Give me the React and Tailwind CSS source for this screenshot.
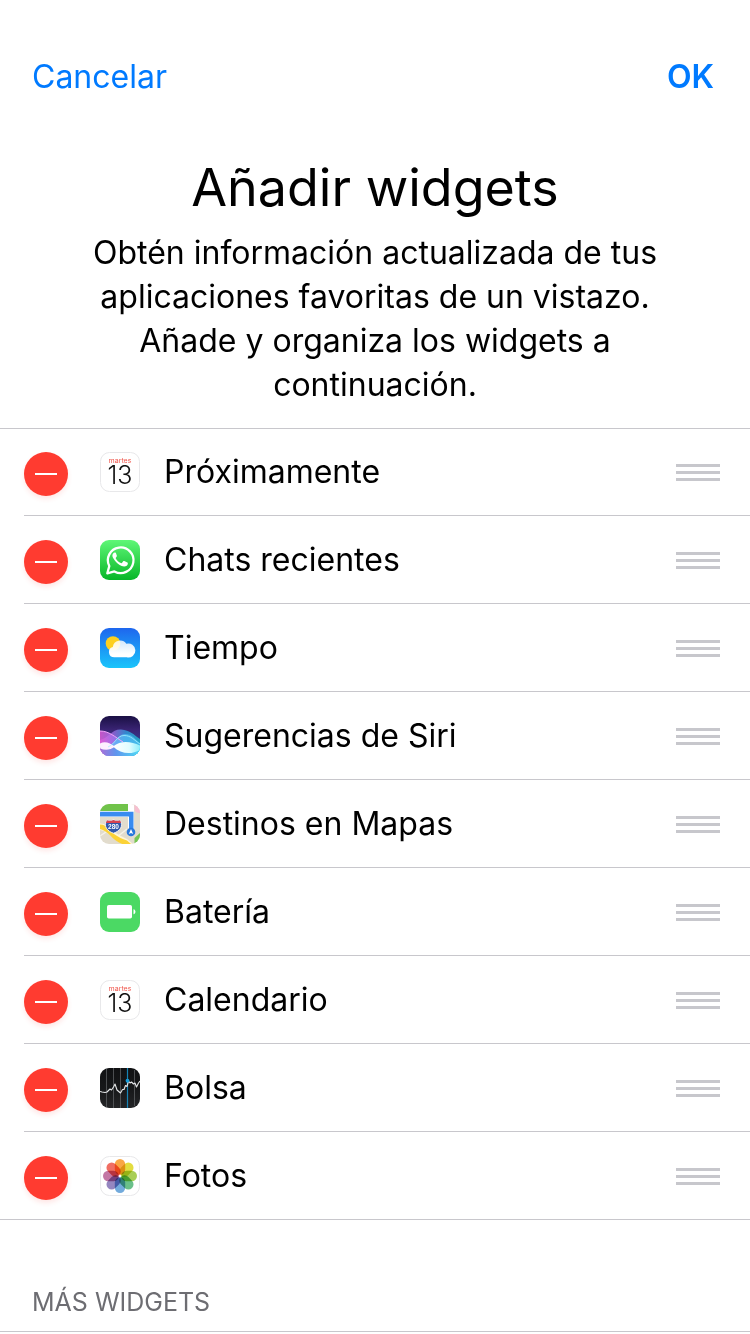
import React from "react";

function CalendarIcon() {
  return (
    <svg viewBox="0 0 40 40" className="size-10" aria-hidden="true">
      <rect x="0.5" y="0.5" width="39" height="39" rx="9" fill="#fff" stroke="#e8e8ea" />
      <text x="20" y="11" textAnchor="middle" fontSize="7" fill="#f0564c" fontFamily="Inter, sans-serif">martes</text>
      <text x="20" y="32" textAnchor="middle" fontSize="25" fontWeight="300" fill="#111" fontFamily="Inter, sans-serif">13</text>
    </svg>
  );
}

function WhatsAppIcon() {
  return (
    <svg viewBox="0 0 40 40" className="size-10" aria-hidden="true">
      <defs>
        <linearGradient id="wa" x1="0" y1="0" x2="0" y2="1">
          <stop offset="0" stopColor="#5ff777" />
          <stop offset="1" stopColor="#07b628" />
        </linearGradient>
      </defs>
      <rect width="40" height="40" rx="9" fill="url(#wa)" />
      <path d="M7.300 33.300l2-7.200A12.800 12.800 0 1 1 14.400 31.400z" fill="none" stroke="#fff" strokeWidth="2.300" strokeLinejoin="round" />
      <path d="M16 13.2c-.4-.8-.7-.8-1.1-.8-1.300 0-2.500 1.500-2.500 3.200 0 1.500.9 3 2.400 4.900 1.900 2.400 4.100 4.300 6.900 5.400 2.800 1.100 5.900.3 6.100-2.200.1-.8 0-1-.4-1.200l-3.100-1.500c-.5-.2-.8-.1-1.100.3l-1.300 1.600c-.3.400-.600.400-1 .2-2.400-1.100-3.800-2.500-5.100-4.700-.2-.4-.1-.6.2-.9.700-.8 1.100-1.300.8-1.900z" fill="#fff" />
    </svg>
  );
}

function WeatherIcon() {
  return (
    <svg viewBox="0 0 40 40" className="size-10" aria-hidden="true">
      <defs>
        <linearGradient id="sky" x1="0" y1="0" x2="0" y2="1">
          <stop offset="0" stopColor="#1e66ee" />
          <stop offset="1" stopColor="#1ac5fb" />
        </linearGradient>
        <linearGradient id="cloud" x1="0" y1="0" x2="0" y2="1">
          <stop offset="0" stopColor="#fff" stopOpacity="0.8" />
          <stop offset="0.8" stopColor="#fff" />
        </linearGradient>
      </defs>
      <rect width="40" height="40" rx="9" fill="url(#sky)" />
      <circle cx="13" cy="15.500" r="7.300" fill="#fdd01f" />
      <path d="M14.200 29.300a5.300 5.300 0 0 1-1.400-10.400A7.500 7.500 0 0 1 26.300 15.800 7 7 0 1 1 26.800 29.300z" fill="url(#cloud)" />
    </svg>
  );
}

function SiriIcon() {
  return (
    <svg viewBox="0 0 40 40" className="size-10" aria-hidden="true">
      <defs>
        <clipPath id="siriClip"><rect width="40" height="40" rx="9" /></clipPath>
        <linearGradient id="siriBg" x1="0" y1="0" x2="0" y2="1">
          <stop offset="0" stopColor="#1a1044" />
          <stop offset="0.35" stopColor="#3a2474" />
          <stop offset="1" stopColor="#285cad" />
        </linearGradient>
        <linearGradient id="siriWave" x1="0" y1="0" x2="1" y2="0">
          <stop offset="0" stopColor="#e85fda" />
          <stop offset="0.35" stopColor="#a474ed" />
          <stop offset="0.65" stopColor="#2fb0f0" />
          <stop offset="1" stopColor="#1fd0dc" />
        </linearGradient>
        <linearGradient id="siriLow" x1="0" y1="0" x2="1" y2="0">
          <stop offset="0" stopColor="#a86fd8" />
          <stop offset="0.4" stopColor="#5f96ee" />
          <stop offset="1" stopColor="#50dcf5" />
        </linearGradient>
        <linearGradient id="siriGlow" x1="0" y1="0" x2="1" y2="0">
          <stop offset="0" stopColor="#ffffff" />
          <stop offset="0.6" stopColor="#e2fcff" />
          <stop offset="1" stopColor="#8deefb" />
        </linearGradient>
      </defs>
      <g clipPath="url(#siriClip)">
        <rect width="40" height="40" fill="url(#siriBg)" />
        <path d="M0 24C9 22 12 13 21 13.500 30 14 34 19 40 23V40H0z" fill="url(#siriWave)" opacity="0.700" />
        <path d="M0 15C9 15 15 21 23 26S34 31 40 30V40H0z" fill="url(#siriWave)" opacity="0.800" />
        <path d="M5 31C14 31 17 18 25 18 32 18 35 23 40 27V40H5z" fill="#58c4fa" opacity="0.650" />
        <path d="M0 30H40V40H0z" fill="url(#siriLow)" />
        <path d="M0 27.500C5 24.500 10 27 15 30.500 10 34.500 5 34.500 0 32.500z" fill="#fdf0ff" />
        <path d="M13 30.500C21 24 31 25.500 40 29.500V34C31 39 21 38 13 30.500z" fill="url(#siriGlow)" />
        <path d="M0 15C9 15 15 21 23 26" fill="none" stroke="#f3a4fa" strokeWidth="1" />
        <path d="M8 31C15 28 17 19.500 24 19.500S34 24 40 28" fill="none" stroke="#a5f0ff" strokeWidth="0.800" />
      </g>
    </svg>
  );
}

function MapsIcon() {
  return (
    <svg viewBox="0 0 40 40" className="size-10" aria-hidden="true">
      <defs><clipPath id="mapClip"><rect width="40" height="40" rx="9" /></clipPath></defs>
      <g clipPath="url(#mapClip)">
        <rect width="40" height="40" fill="#e2dccd" />
        <rect width="28" height="7" fill="#70c34a" />
        <path d="M28 0h6v24h-6z" fill="#fff" />
        <path d="M34.500 0H40v9c-3 0-5.500-1-5.500-4z" fill="#f6bfd0" />
        <path d="M34.500 40V34l5.500-5v11z" fill="#76c654" />
        <path d="M0 32l9-6M17 33l10-8" stroke="#f6f3e9" strokeWidth="1.400" fill="none" />
        <path d="M0 19.500c5 0 8 3 11 6s9 6 16 9.500l6 5H22C13 36 9 27 0 26z" fill="#fff6d8" />
        <path d="M0 20.500c4 0 7 2 10 5.500s7 7 17 10.500l4 3.500H22C12 36 8 26.500 0 25z" fill="#fbd237" />
        <path d="M0 7h34v20h-6V13H0z" fill="#fff" />
        <path d="M0 7.700h33.500V27H29V12.500H0z" fill="#388bf0" />
        <circle cx="31" cy="28" r="4.300" fill="#2878dc" />
        <path d="M31 25l2.200 5-2.200-1-2.200 1z" fill="#fff" />
        <path d="M7 16.200c2.200 1 4 .800 6.500-.3 2.500 1.100 4.300 1.300 6.500.3 4 6-.3 11-6.500 13C7.300 27.200 3 22.200 7 16.200z" fill="#3158aa" stroke="#fff" strokeWidth="0.800" />
        <path d="M7 16.200c2.200 1 4 .800 6.500-.3 2.500 1.100 4.300 1.300 6.500.3l1.100 2.800H5.900z" fill="#d84450" />
        <text x="13.500" y="25.300" textAnchor="middle" fontSize="6.500" fontWeight="600" fill="#fff" fontFamily="'Liberation Sans', sans-serif">280</text>
      </g>
    </svg>
  );
}

function BatteryIcon() {
  return (
    <svg viewBox="0 0 40 40" className="size-10" aria-hidden="true">
      <rect width="40" height="40" rx="9" fill="#4bd964" />
      <rect x="7" y="13" width="25" height="13.500" rx="1.800" fill="#fff" />
      <path d="M33.500 17.300c2.600.4 2.600 4.600 0 5z" fill="#fff" />
    </svg>
  );
}

function StocksIcon() {
  return (
    <svg viewBox="0 0 40 40" className="size-10" aria-hidden="true">
      <defs>
        <linearGradient id="stk" x1="0" y1="0" x2="0" y2="1">
          <stop offset="0" stopColor="#101113" />
          <stop offset="0.550" stopColor="#17181a" />
          <stop offset="1" stopColor="#242527" />
        </linearGradient>
      </defs>
      <rect width="40" height="40" rx="9" fill="url(#stk)" />
      <path d="M6.500 1v38M13.500 0v40M20.500 0v40M34.500 2v36" stroke="#66686b" strokeWidth="0.700" />
      <path d="M27.500 0v40" stroke="#1683b5" strokeWidth="1.200" />
      <path d="M0 23.500l2 .5 3 .5 2-.5 3-3 1.500 1 2-3 1.500-3 2 6 3.500 3 2-3.500h1.500l1.500-4 1.500 1 1.500-5.500 1.500 2 1.500-1 2 2 1.500-1 1.500 4 2-4L40 13" fill="none" stroke="#e3e5e7" strokeWidth="1.100" strokeLinejoin="round" />
      <circle cx="27.500" cy="12.700" r="1.900" fill="#149bd8" />
    </svg>
  );
}

const petals = ["#f9a13a", "#e2dc35", "#a5cc4e", "#62bd83", "#6aa6da", "#8f80bd", "#c0709f", "#f0665a"];

function PhotosIcon() {
  return (
    <svg viewBox="0 0 40 40" className="size-10" aria-hidden="true">
      <rect x="0.5" y="0.5" width="39" height="39" rx="9" fill="#fff" stroke="#e8e8ea" />
      <g className="isolate">
        {petals.map((color, i) => (
          <rect key={color} x="14.800" y="3" width="10.400" height="15.800" rx="5.200" fill={color} opacity="0.950" transform={`rotate(${i * 45} 20 20)`} className="mix-blend-multiply" />
        ))}
      </g>
      <circle cx="20" cy="20" r="1.300" fill="#fff" />
    </svg>
  );
}

const widgets = [
  ["Próximamente", CalendarIcon],
  ["Chats recientes", WhatsAppIcon],
  ["Tiempo", WeatherIcon],
  ["Sugerencias de Siri", SiriIcon],
  ["Destinos en Mapas", MapsIcon],
  ["Batería", BatteryIcon],
  ["Calendario", CalendarIcon],
  ["Bolsa", StocksIcon],
  ["Fotos", PhotosIcon],
];

function WidgetRow({ name, Icon }) {
  return (
    <li className="group flex h-[88px] pl-6 first:h-[87px] last:border-b last:border-[#c8c7cc]">
      <div className="flex flex-1 items-center border-b border-[#c8c7cc] pt-px pr-[30px] group-first:pt-0 group-last:border-b-0">
        <button type="button" aria-label={`Eliminar ${name}`} className="mt-1 flex size-11 items-center justify-center rounded-full bg-[#ff3b30] shadow-[0_3px_5px_rgba(255,59,48,0.12)]">
          <span className="h-0.5 w-[22px] bg-white" />
        </button>
        <span className="ml-8"><Icon /></span>
        <span className="ml-6 flex-1 text-[32px] leading-10">{name}</span>
        <button type="button" aria-label={`Reordenar ${name}`} className="flex w-11 flex-col gap-1">
          <span className="h-[3px] bg-[#c7c7cc]" />
          <span className="h-[3px] bg-[#c7c7cc]" />
          <span className="h-[3px] bg-[#c7c7cc]" />
        </button>
      </div>
    </li>
  );
}

export default function App() {
  return (
    <main className="min-h-screen bg-white font-['Inter',sans-serif] text-black">
      <nav className="flex items-center justify-between px-8 pt-[57px] pr-9 text-[32px] leading-10 text-[#007aff]">
        <button type="button">Cancelar</button>
        <button type="button" className="font-semibold">OK</button>
      </nav>
      <header className="px-20 pt-[55px] pb-[21px] text-center">
        <h1 className="text-[52px] leading-[72px]">Añadir widgets</h1>
        <p className="mt-[7px] text-[32px] leading-11">
          Obtén información actualizada de tus aplicaciones favoritas de un vistazo. Añade y organiza los widgets a continuación.
        </p>
      </header>
      <ul className="border-t border-[#c8c7cc]">
        {widgets.map(([name, Icon]) => (
          <WidgetRow key={name} name={name} Icon={Icon} />
        ))}
      </ul>
      <section className="border-b border-[#c8c7cc] px-8 pt-[66px] pb-3">
        <h2 className="text-[25px] leading-[33px] text-[#6d6d72]">MÁS WIDGETS</h2>
      </section>
    </main>
  );
}
